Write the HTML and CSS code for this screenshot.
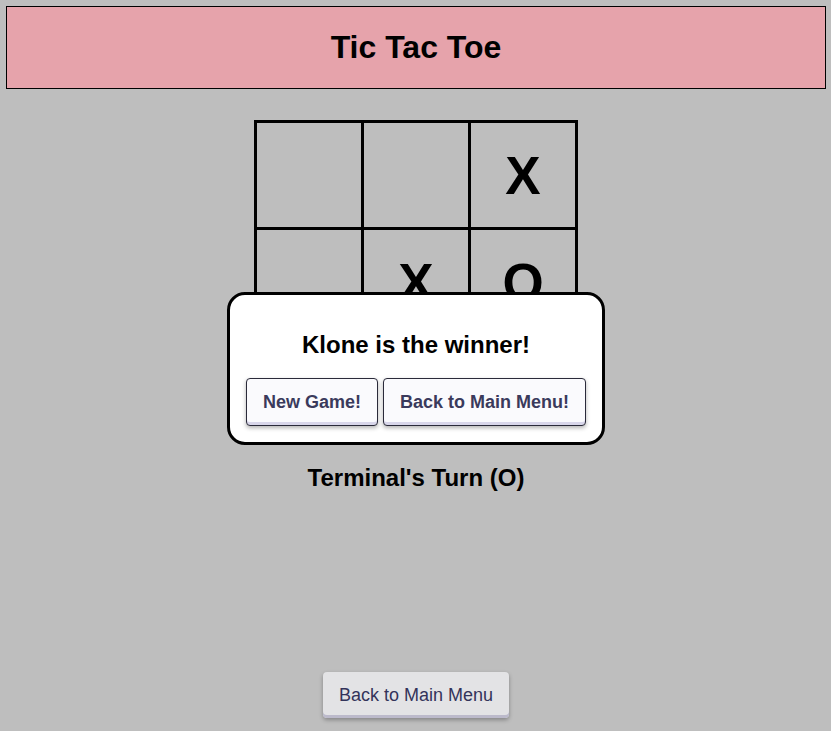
FILE: index.html
```html
<!DOCTYPE html>
<html lang="en">
<head>
<meta charset="utf-8">
<title>Tic Tac Toe</title>
<link rel="stylesheet" href="styles.css">
</head>
<body>
<div class="app">
  <header class="header"><h1 class="title">Tic Tac Toe</h1></header>
  <div class="board">
    <div class="cell"></div>
    <div class="cell"></div>
    <div class="cell">X</div>
    <div class="cell"></div>
    <div class="cell">X</div>
    <div class="cell">O</div>
    <div class="cell">X</div>
    <div class="cell">O</div>
    <div class="cell"></div>
  </div>
  <p class="turn">Terminal's Turn (O)</p>
  <button class="menu-btn">Back to Main Menu</button>
  <div class="modal">
    <h2 class="modal-title">Klone is the winner!</h2>
    <div class="modal-actions">
      <button class="modal-btn">New Game!</button>
      <button class="modal-btn">Back to Main Menu!</button>
    </div>
  </div>
</div>
</body>
</html>
```
FILE: styles.css
```css
html, body {
  margin: 0;
  padding: 0;
  background: #bebebe;
  font-family: "Liberation Sans", Arial, sans-serif;
}
.app {
  min-height: 100vh;
  box-sizing: border-box;
  padding: 6px 5px 0 6px;
  display: flex;
  flex-direction: column;
  align-items: center;
}
.header {
  align-self: stretch;
  background: #e6a3ab;
  border: 1px solid #000;
}
.title {
  margin: 0;
  padding: 22px 0;
  font-size: 32px;
  line-height: 37px;
  font-weight: bold;
  text-align: center;
  color: #000;
}
.board {
  margin-top: 31px;
  display: grid;
  grid-template-columns: repeat(3, 104px);
  grid-template-rows: repeat(3, 104px);
  gap: 3px;
  padding: 3px;
  background: #000;
}
.cell {
  background: #bebebe;
  display: flex;
  align-items: center;
  justify-content: center;
  font-size: 53px;
  font-weight: bold;
  color: #000;
}
.turn {
  margin: 20px 0 0;
  font-size: 24px;
  line-height: 28px;
  font-weight: bold;
  color: #000;
}
.menu-btn {
  margin-top: auto;
  margin-bottom: 13px;
  font-family: "Liberation Sans", Arial, sans-serif;
  font-size: 18px;
  line-height: 22px;
  padding: 12px 16px;
  border: none;
  border-radius: 4px;
  background: #e3e3e5;
  color: #33335a;
  box-shadow: inset 0 -3px 0 #bcbacb, 0 2px 4px rgba(0, 0, 0, 0.3);
}
.modal {
  position: absolute;
  top: 292px;
  left: 1px;
  right: 0;
  margin: 0 auto;
  width: fit-content;
  background: #fff;
  border: 3px solid #000;
  border-radius: 18px;
  padding: 16px;
  text-align: center;
}
.modal-title {
  margin: 20px 0 19px;
  font-size: 24px;
  line-height: 28px;
  font-weight: bold;
  color: #000;
}
.modal-actions {
  display: flex;
  gap: 5px;
}
.modal-btn {
  font-family: "Liberation Sans", Arial, sans-serif;
  font-size: 18px;
  line-height: 22px;
  font-weight: bold;
  padding: 12px 16px;
  border: 1px solid #2a2a3a;
  border-radius: 4px;
  background: #fafafd;
  color: #3a3a5c;
  box-shadow: inset 0 -3px 0 #d8d6ea, 0 2px 4px rgba(0, 0, 0, 0.3);
}
```
